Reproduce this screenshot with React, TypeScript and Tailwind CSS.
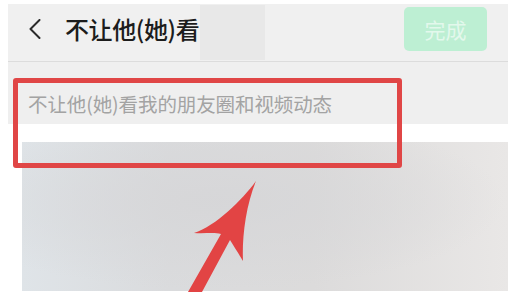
import React from "react";

export default function App() {
  return (
    <div
      className="relative w-[517px] h-[292px] overflow-hidden bg-white"
      style={{ fontFamily: '"Noto Sans CJK SC", "Noto Sans", sans-serif' }}
    >
      <div className="flex flex-col pl-[8px] pr-[9px] pt-[4px]">
        {/* top bar */}
        <div className="flex items-stretch h-[58px] bg-[#f0f0f0] border-b border-[#dcdcdc]">
          <div className="flex items-center pl-[21px] w-[57px] pb-[8px]">
            <svg width="12" height="20" viewBox="0 0 12 20" className="block">
              <path d="M10.5 1 L1.5 10 L10.5 19" fill="none" stroke="#2b2b2b" strokeWidth="2" strokeLinecap="round" strokeLinejoin="round" />
            </svg>
          </div>
          <div className="flex items-center w-[135px] pb-[8px] text-[24px] leading-none font-medium text-[#1c1c1c] tracking-[-0.4px]">
            不让他(她)看
          </div>
          <div className="w-[65px] my-[1px] bg-[#e8e8e8]" />
          <div className="flex-1" />
          <div className="flex items-center mr-[21px]">
            <div className="w-[83px] h-[44px] rounded-[5px] bg-[#bdefd3] flex items-center justify-center text-[21px] text-[#e3f8ec] leading-none mb-[7px]">
              完成
            </div>
          </div>
        </div>
        {/* subtitle */}
        <div className="h-[62px] bg-[#efefef] flex items-start pl-[20px] pt-[32px]">
          <span className="text-[19.5px] leading-none text-[#a3a3a3] tracking-[-0.1px]">
            不让他(她)看我的朋友圈和视频动态
          </span>
        </div>
      </div>
      <div className="h-[18px] bg-white" />
      <div
        className="ml-[22px] w-[486px] h-[149px]"
        style={{
          background:
            "radial-gradient(ellipse at 40% 40%, rgba(214,214,216,0.9) 0%, rgba(214,214,216,0) 70%), linear-gradient(90deg, #dfe4e8 0%, #dadbdd 30%, #dcdbdb 60%, #e9e7e6 100%)",
        }}
      />
      {/* red box */}
      <div className="absolute left-[13px] top-[78px] w-[389px] h-[90px] border-[5px] border-[#e04646] rounded-[3px]" />
      {/* arrow */}
      <svg className="absolute left-0 top-0" width="517" height="292" viewBox="0 0 517 292">
        <path
          d="M256 181 C 242 200, 216 226, 194 233 C 204 234, 214 232, 221 234 L 188 292 L 202 292 L 230 240 C 235 248, 240 256, 243 261 C 242 240, 245 208, 256 181 Z"
          fill="#e24444"
        />
      </svg>
    </div>
  );
}
